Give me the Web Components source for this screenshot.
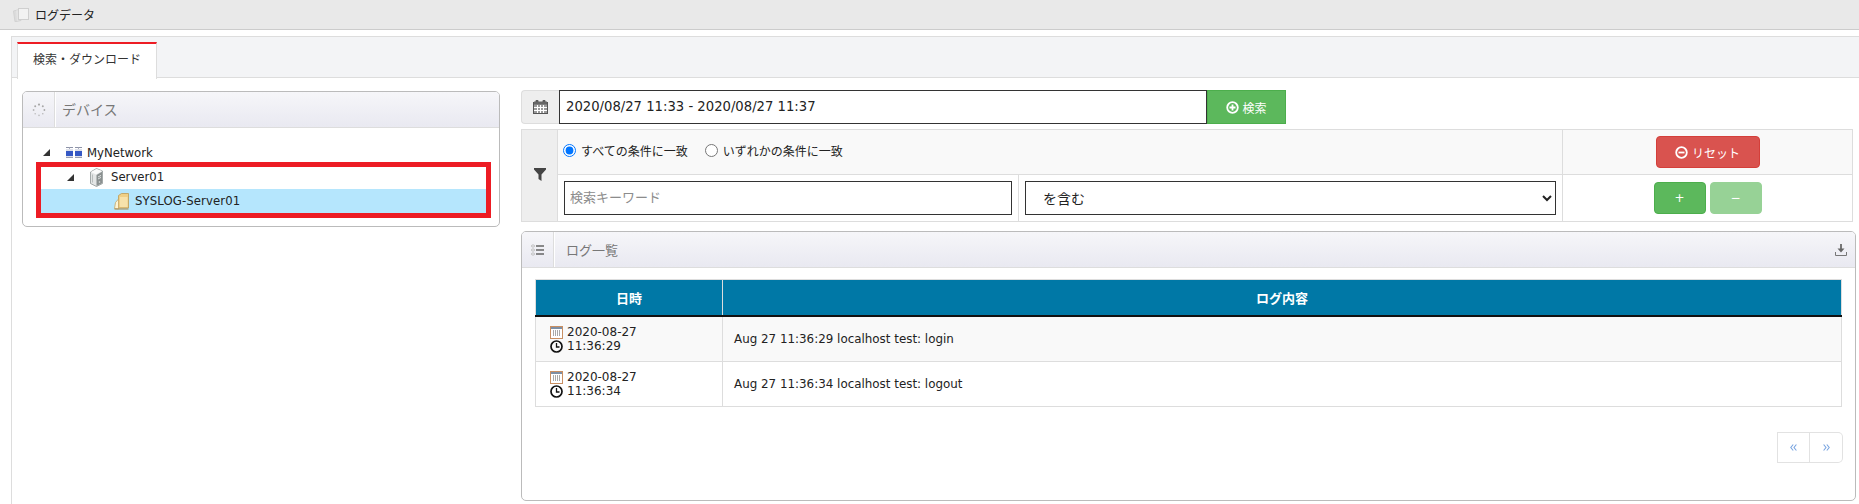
<!DOCTYPE html>
<html lang="ja">
<head>
<meta charset="utf-8">
<title>ログデータ</title>
<style>
html,body{margin:0;padding:0;background:#fff;}
body{font-family:"DejaVu Sans","Noto Sans CJK JP",sans-serif;font-size:12px;color:#222;overflow:hidden;}
</style>
</head>
<body>
<log-app></log-app>
<script>
const ICONS={
 papers:[16,14,'<path d="M.5 3l6-1.500 1.500 11-6 1.200z" fill="#dcdcdc" stroke="#d2d2d2"/><path d="M3 2.500l5-1v10l-4 1.500z" fill="#e4e4e4"/><rect x="5.500" y=".5" width="10" height="11" fill="#f2f2f2" stroke="#cfcfcf"/>'],
 spinner:[14,14,'<g fill="#a8a8a8"><circle cx="7" cy="1.600" r="1.100"/><circle cx="10.800" cy="3.200" r="1"/><circle cx="12.400" cy="7" r=".9"/><circle cx="10.800" cy="10.800" r=".8" opacity=".8"/><circle cx="7" cy="12.400" r=".8" opacity=".7"/><circle cx="3.200" cy="10.800" r=".8" opacity=".7"/><circle cx="1.600" cy="7" r=".9" opacity=".8"/><circle cx="3.200" cy="3.200" r="1"/></g>'],
 network:[16,12,'<path d="M0 .5h7M9 .5h7" stroke="#8d93a8"/><path d="M3.500 .5v2M12.500 .5v2" stroke="#a9adbd"/><rect x="0" y="2" width="7" height="9" fill="#dde0ea"/><rect x="9" y="2" width="7" height="9" fill="#dde0ea"/><rect x="0" y="4" width="7" height="5" fill="#3558c4"/><rect x="9" y="4" width="7" height="5" fill="#3558c4"/><path d="M0 10.500h7M9 10.500h7" stroke="#9a9eb2"/>'],
 server:[13,19,'<path d="M.5 4L6.500.5 12.500 3v12.500L6.500 18.500l-6-3z" fill="#e4e6e6" stroke="#8f9595" stroke-width=".8"/><path d="M1 4l5 2.500L12 3 6.500 1z" fill="#fbfbfb"/><path d="M6.500 7v11l5.500-2.800V3.800z" fill="#8a9090"/><path d="M8 9l3-1.600M8 11l3-1.600" stroke="#dfe2e2"/><circle cx="9.500" cy="14" r=".8" fill="#dfe2e2"/><path d="M2.500 6.500v8" stroke="#b9bebe"/>'],
 folder:[15,17,'<path d="M4.500 2.500l3-2h7V15H4.500z" fill="#efcf86" stroke="#bc9a55" stroke-width=".8"/><path d="M6 4h7.500v10H6z" fill="#f7e2ab"/><path d="M.5 15.500l1-6 3-3.500v10z" fill="#fdf3d3" stroke="#c8a765" stroke-width=".8"/><path d="M.5 16h14" stroke="#a98a52"/>'],
 cal:[15,14,'<rect x="0.500" y="2.500" width="14" height="11" fill="#9a9a9a" stroke="#555"/><rect x="2.500" y="0" width="3" height="4" rx="1" fill="#555"/><rect x="9.500" y="0" width="3" height="4" rx="1" fill="#555"/><rect x="1" y="1.500" width="13" height="3" fill="#666"/><path d="M1 7.500h13M1 10.500h13M4.500 5v8M7.500 5v8M10.500 5v8" stroke="#fff" stroke-width="1"/>'],
 funnel:[12,13,'<path d="M0 0h12v1.500L7.500 6.500V13L4.500 11V6.500L0 1.500z" fill="#444"/>'],
 plusc:[13,13,'<circle cx="6.500" cy="6.500" r="5.300" fill="none" stroke="#fff" stroke-width="1.800"/><path d="M3.500 6.500h6M6.500 3.500v6" stroke="#fff" stroke-width="1.800"/>'],
 minusc:[13,13,'<circle cx="6.500" cy="6.500" r="5.300" fill="none" stroke="#fff" stroke-width="1.800"/><path d="M3.500 6.500h6" stroke="#fff" stroke-width="1.800"/>'],
 list:[13,12,'<g fill="none" stroke="#bbb"><rect x=".5" y="1" width="3" height="2" rx="1"/><rect x=".5" y="5" width="3" height="2" rx="1"/><rect x=".5" y="9" width="3" height="2" rx="1"/></g><path d="M5 2h8M5 6h8M5 10h8" stroke="#666" stroke-width="1.400"/>'],
 download:[12,12,'<path d="M6 0v5" stroke="#777" stroke-width="2"/><path d="M2.500 4.500h7L6 8.500z" fill="#666"/><path d="M.5 8v3.500h11V8" fill="none" stroke="#777"/>'],
 calo:[13,13,'<rect x=".5" y=".5" width="12" height="12" fill="#fff" stroke="#c98f62"/><rect x="1" y="1" width="11" height="2" fill="#7d8fa5"/><path d="M3 5h1M5 5h1M7 5h1M9 5h1M3 7h1M5 7h1M7 7h1M9 7h1M3 9h1M5 9h1M7 9h1M9 9h1" stroke="#555"/>'],
 clock:[13,13,'<circle cx="6.500" cy="6.500" r="5.500" fill="none" stroke="#111" stroke-width="1.700"/><path d="M6.500 3v4H9.500" fill="none" stroke="#111" stroke-width="1.300"/>'],
 left:[7,7,'<path d="M3.200 .5L.8 3.500l2.400 3M6.400 .5L4 3.500l2.400 3" fill="none" stroke="#7aa5e0" stroke-width="1.100"/>'],
 right:[7,7,'<path d="M.6 .5L3 3.500.6 6.500M3.800 .5L6.200 3.500 3.800 6.500" fill="none" stroke="#7aa5e0" stroke-width="1.100"/>']
};
function def(name,html,extra){
  const t=document.createElement('template');t.innerHTML=html;
  customElements.define(name,class extends HTMLElement{
    constructor(){super();this.attachShadow({mode:'open'}).appendChild(t.content.cloneNode(true));}
    connectedCallback(){extra&&extra(this,this.shadowRoot);}
  });
}
def('ui-icon','<style>:host{display:inline-flex;line-height:0;flex:none}svg{display:block}</style><span id="h"></span>',(el,sr)=>{
  const d=ICONS[el.getAttribute('name')];
  sr.getElementById('h').innerHTML=`<svg xmlns="http://www.w3.org/2000/svg" width="${d[0]}" height="${d[1]}" viewBox="0 0 ${d[0]} ${d[1]}">${d[2]}</svg>`;
});
def('title-bar',`<style>
:host{display:flex;align-items:center;height:29px;background:#e9e9e9;border-bottom:1px solid #ccc;padding-left:13px;gap:6px;color:#222;font-size:12px}
</style><ui-icon name="papers"></ui-icon><slot></slot>`);
def('tab-strip',`<style>
:host{display:flex;height:41px;box-sizing:border-box;padding:5px 0 0 5px;background:#f3f4f6;border-bottom:1px solid #ddd}
.tab{box-sizing:border-box;width:140px;height:37px;background:#fff;border:1px solid #ddd;border-top:2px solid #ed1c24;border-bottom:0;text-align:center;line-height:33px;font-size:12px;color:#333}
</style><div class="tab"><slot></slot></div>`);
def('log-panel',`<style>
:host{display:block;box-sizing:border-box;border:1px solid #bbb;border-radius:5px;background:#fff;overflow:hidden}
header{display:flex;align-items:center;height:35px;background:linear-gradient(#f6f6f9,#e9e9f1);border-bottom:1px solid #ddd;color:#777;font-size:var(--title-size,13px)}
.ic{box-sizing:border-box;width:var(--ic-w,32px);height:100%;display:flex;align-items:center;justify-content:center;border-right:1px solid #ddd;box-shadow:1px 0 0 #fff;flex:none}
.t{padding:0 0 var(--t-lift,0) var(--t-pad,12px);flex:1}
.a{padding-right:8px;display:flex}
</style><header><div class="ic"><slot name="icon"></slot></div><div class="t"><slot name="title"></slot></div><div class="a"><slot name="actions"></slot></div></header><slot></slot>`);
def('tree-node',`<style>
:host{display:flex;box-sizing:border-box;align-items:center;height:var(--h,22px);color:#222;font-size:11.700px;white-space:nowrap}
:host([selected]){background:#b5e6fd}
.ar{width:23px;flex:none;display:flex}
.ar i{display:block;width:0;height:0;border-style:solid;border-width:0 0 7px 7px;border-color:transparent transparent #333 transparent}
:host([leaf]) .ar i{display:none}
.ic{width:21px;flex:none;display:flex;align-items:center}
</style><span class="ar"><i></i></span><span class="ic"><slot name="icon"></slot></span><slot></slot>`,(el)=>{
  el.style.paddingLeft=(el.getAttribute('pad')||0)+'px';
  if(el.getAttribute('h'))el.style.setProperty('--h',el.getAttribute('h')+'px');
});
def('mark-box',`<style>
:host{display:block;border:5px solid #ed1c24;margin:-1px 8px 8px 13px;background:#fff}
</style><slot></slot>`);
def('date-bar',`<style>
:host{display:flex;height:34px;width:765px;font-size:13px;box-sizing:border-box}
.ic{box-sizing:border-box;width:38px;display:flex;align-items:center;justify-content:center;background:#eee;border:1px solid #ddd;border-right:0;border-radius:4px 0 0 4px}
input{box-sizing:border-box;flex:1;min-width:0;height:34px;border:1px solid #333;padding:0 6px 2px;font:13.200px "DejaVu Sans",sans-serif;color:#222;outline:0;background:#fff}
button{box-sizing:border-box;width:79px;height:34px;background:#5cb85c;border:1px solid #4cae4c;color:#fff;font:12px "DejaVu Sans","Noto Sans CJK JP",sans-serif;display:flex;align-items:center;justify-content:center;gap:3px;padding:0}
</style><div class="ic"><ui-icon name="cal"></ui-icon></div><input value="2020/08/27 11:33 - 2020/08/27 11:37"><button><ui-icon name="plusc"></ui-icon>検索</button>`);
def('filter-table',`<style>
:host{display:block;width:1332px;margin-top:5px}
table{border-collapse:collapse;table-layout:fixed;width:100%;font-size:12px;color:#222}
td{border:1px solid #ddd;padding:0;box-sizing:border-box}
.side{background:#eee;text-align:center;vertical-align:middle;width:36px}
.r1 td{height:45px;background:#f9f9f9}
.r2 td{height:47px;background:#fff}
.rd{display:flex;align-items:center;padding:0 0 4px 5px}
.rd label{display:flex;align-items:center;gap:5px;margin-right:17px}
input[type=radio]{margin:0;width:13px;height:13px}
.field{padding:0 6px}
.text{box-sizing:border-box;width:100%;height:34px;display:block;border:1px solid #333;padding:0 5px 3px;font:13px "Noto Sans CJK JP",sans-serif;outline:0}
.text::placeholder{color:#8c8c8c}
select{box-sizing:border-box;width:100%;height:34px;display:block;border:1px solid #333;padding:0 0 0 13px;font:14px "Noto Sans CJK JP",sans-serif;background:#fff;color:#222;outline:0}
.act{text-align:center}
.btns{display:flex;justify-content:center;gap:4px}
button{box-sizing:border-box;height:32px;border-radius:4px;color:#fff;font:12px "DejaVu Sans","Noto Sans CJK JP",sans-serif;padding:0;display:flex;align-items:center;justify-content:center;gap:4px}
.reset{width:104px;background:#d9534f;border:1px solid #d43f3a}
.add{width:52px;background:#5cb85c;border:1px solid #4cae4c}
.sub{width:52px;background:#97d296;border:1px solid #97d296}
ui-icon{display:inline-flex}
</style><table><colgroup><col style="width:36px"><col style="width:461px"><col style="width:544px"><col></colgroup>
<tr class="r1"><td class="side" rowspan="2" style="background:#eee"><ui-icon name="funnel"></ui-icon></td>
<td colspan="2"><div class="rd"><label><input type="radio" name="m" checked>すべての条件に一致</label><label><input type="radio" name="m">いずれかの条件に一致</label></div></td>
<td class="act"><div class="btns"><button class="reset"><ui-icon name="minusc"></ui-icon>リセット</button></div></td></tr>
<tr class="r2"><td class="field"><input class="text" placeholder="検索キーワード"></td><td class="field"><select><option>を含む</option><option>を含まない</option></select></td>
<td class="act"><div class="btns"><button class="add">+</button><button class="sub">−</button></div></td></tr></table>`);
def('log-table',`<style>
:host{display:block}
table{border-collapse:collapse;table-layout:fixed;width:100%;font-size:12px;color:#222}
th{background:#0078a6;color:#fff;height:35px;font-size:13px;font-weight:bold;border:1px solid #ddd;border-bottom:2px solid #111;padding:0}
td{border:1px solid #ddd;padding:0;height:44px}
tbody tr:nth-child(odd) td{background:#f9f9f9}
.d{padding-left:14px;line-height:14px}
.d div{display:flex;align-items:center;gap:4px}
.m{padding-left:11px;font-size:11.900px}
</style><table><colgroup><col style="width:187px"><col></colgroup>
<thead><tr><th>日時</th><th>ログ内容</th></tr></thead>
<tbody>
<tr><td class="d"><div><ui-icon name="calo"></ui-icon>2020-08-27</div><div><ui-icon name="clock"></ui-icon>11:36:29</div></td><td class="m">Aug 27 11:36:29 localhost test: login</td></tr>
<tr><td class="d"><div><ui-icon name="calo"></ui-icon>2020-08-27</div><div><ui-icon name="clock"></ui-icon>11:36:34</div></td><td class="m">Aug 27 11:36:34 localhost test: logout</td></tr>
</tbody></table>`);
def('log-pager',`<style>
:host{display:flex;justify-content:flex-end;margin:25px -1px 0 0}
a{box-sizing:border-box;width:33px;height:31px;display:flex;align-items:center;justify-content:center;border:1px solid #e2e2e2;background:#fff}
a:first-child{border-radius:5px 0 0 5px;border-right-width:2px}
a:last-child{border-radius:0 5px 5px 0;border-left:0}
</style><a><ui-icon name="left"></ui-icon></a><a><ui-icon name="right"></ui-icon></a>`);
def('log-app',`<style>
:host{display:block;height:504px;overflow:hidden}
.box{margin:6px 0 0 11px;border-left:1px solid #ddd;border-top:1px solid #ddd;height:468px;box-sizing:border-box}
.cols{display:grid;grid-template-columns:478px 1335px;column-gap:21px;padding:12px 0 0 10px;align-items:start}
.left{margin-top:1px}
.tree{padding:14px 0 0}
.list{--ic-w:32px}
.list .body{padding:11px 13px 37px 13px}
.dev{--title-size:14px;--t-pad:7px;--t-lift:2px}
</style>
<title-bar>ログデータ</title-bar>
<div class="box">
  <tab-strip>検索・ダウンロード</tab-strip>
  <div class="cols">
    <log-panel class="left dev">
      <ui-icon slot="icon" name="spinner"></ui-icon><span slot="title">デバイス</span>
      <div class="tree">
        <tree-node pad="7" h="21" style="margin-left:13px"><ui-icon slot="icon" name="network"></ui-icon>MyNetwork</tree-node>
        <mark-box>
          <tree-node pad="26" h="22" style="padding-bottom:2px"><ui-icon slot="icon" name="server"></ui-icon>Server01</tree-node>
          <tree-node pad="50" h="24" leaf selected style="letter-spacing:.1px"><ui-icon slot="icon" name="folder"></ui-icon>SYSLOG-Server01</tree-node>
        </mark-box>
      </div>
    </log-panel>
    <div>
      <date-bar></date-bar>
      <filter-table></filter-table>
      <log-panel class="list" style="margin-top:9px">
        <ui-icon slot="icon" name="list"></ui-icon><span slot="title">ログ一覧</span><ui-icon slot="actions" name="download"></ui-icon>
        <div class="body"><log-table></log-table><log-pager></log-pager></div>
      </log-panel>
    </div>
  </div>
</div>`);
</script>
</body>
</html>
